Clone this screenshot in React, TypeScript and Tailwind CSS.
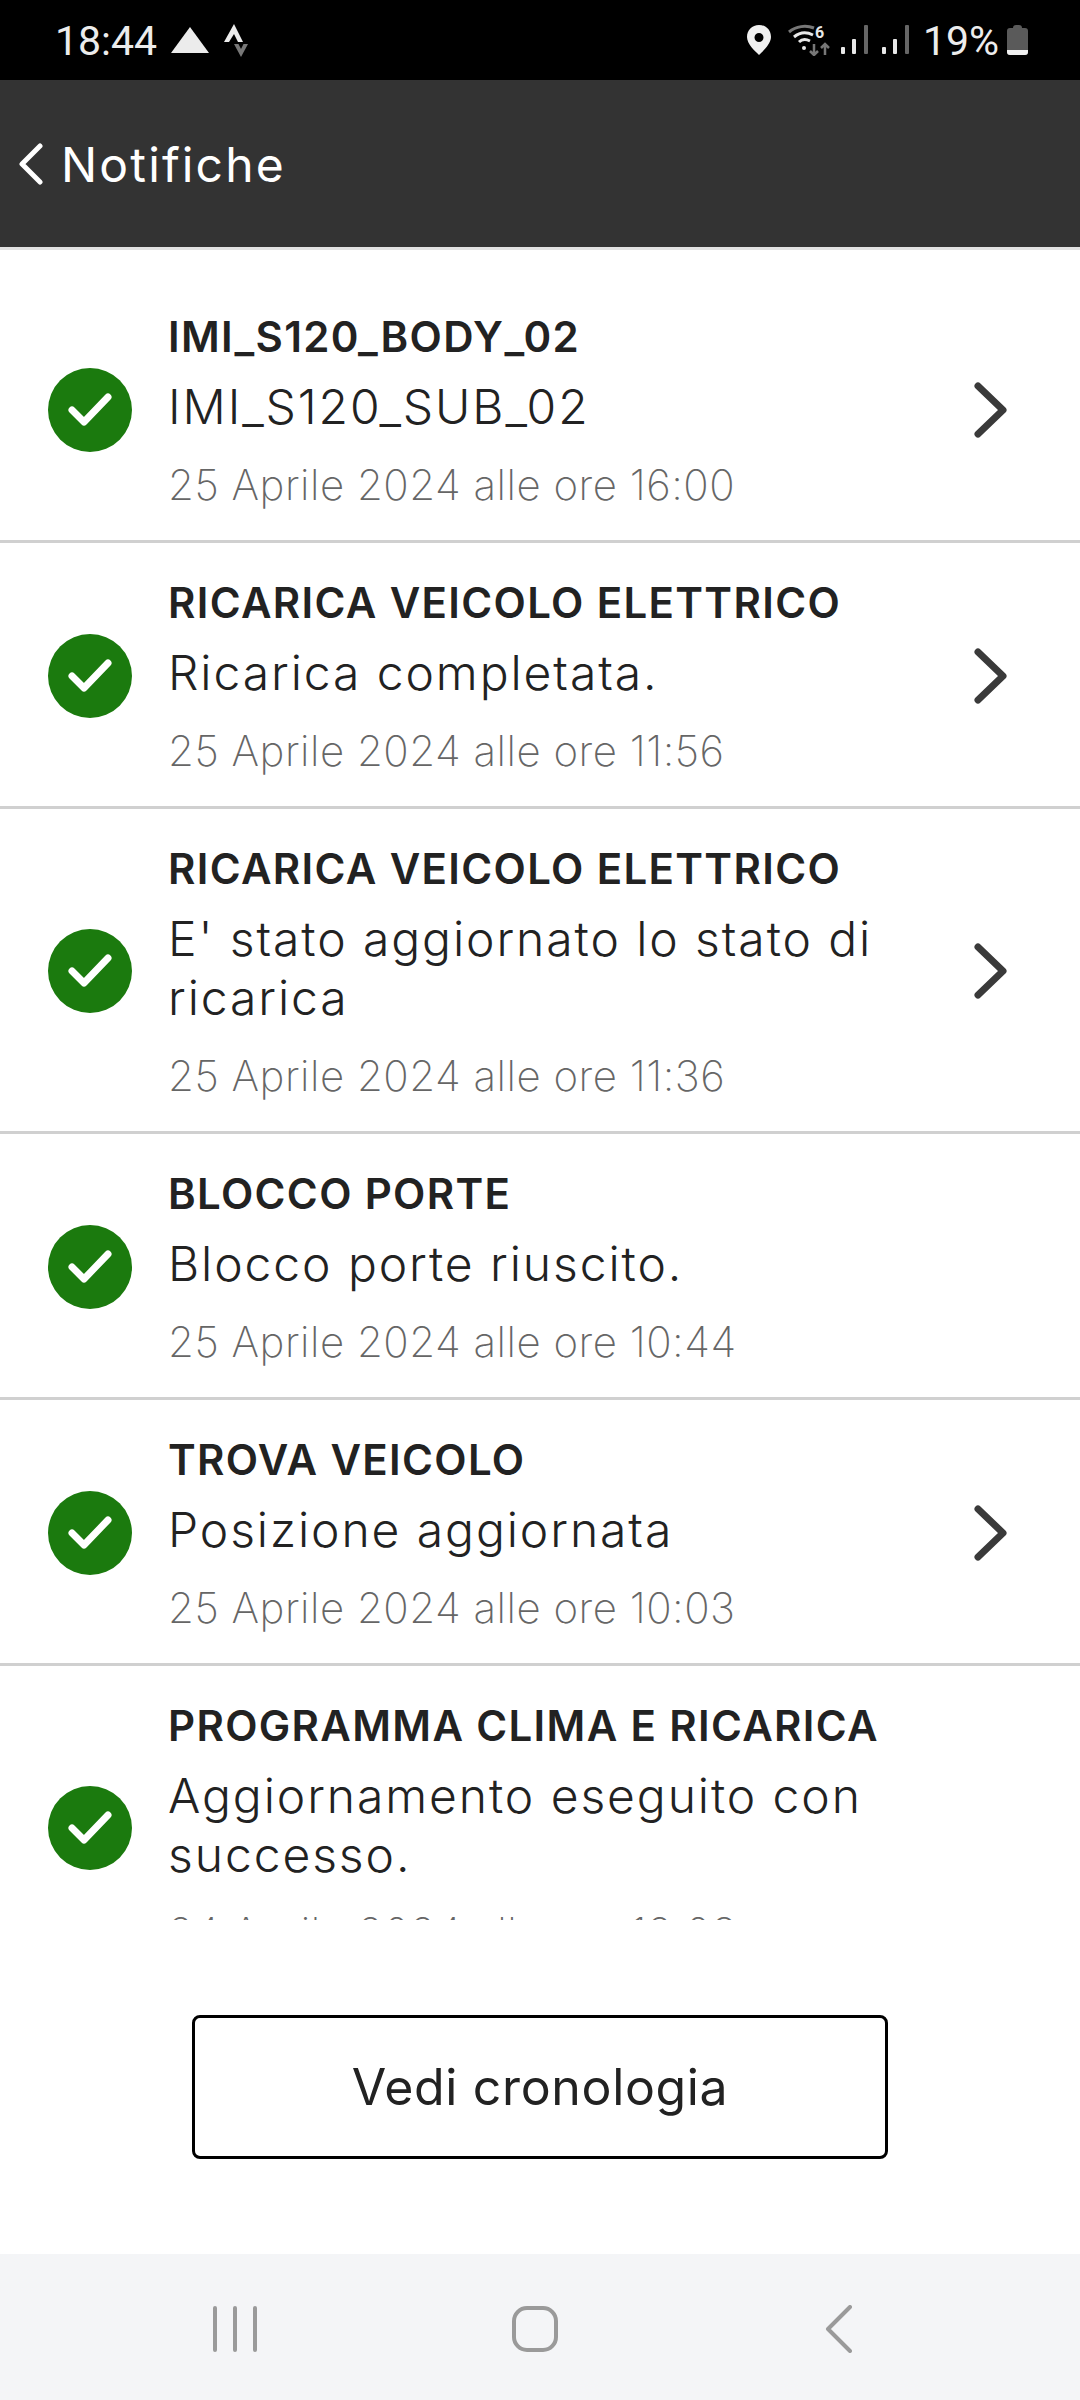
import React from "react";

type Item = {
  title: string;
  body: string;
  date: string;
  arrow: boolean;
};

const items: Item[] = [
  { title: "IMI_S120_BODY_02", body: "IMI_S120_SUB_02", date: "25 Aprile 2024 alle ore 16:00", arrow: true },
  { title: "RICARICA VEICOLO ELETTRICO", body: "Ricarica completata.", date: "25 Aprile 2024 alle ore 11:56", arrow: true },
  { title: "RICARICA VEICOLO ELETTRICO", body: "E' stato aggiornato lo stato di ricarica", date: "25 Aprile 2024 alle ore 11:36", arrow: true },
  { title: "BLOCCO PORTE", body: "Blocco porte riuscito.", date: "25 Aprile 2024 alle ore 10:44", arrow: false },
  { title: "TROVA VEICOLO", body: "Posizione aggiornata", date: "25 Aprile 2024 alle ore 10:03", arrow: true },
  { title: "PROGRAMMA CLIMA E RICARICA", body: "Aggiornamento eseguito con successo.", date: "24 Aprile 2024 alle ore 12:08", arrow: false },
];

const Bars = () => (
  <svg width="29" height="30" viewBox="0 0 29 30">
    <rect x="0" y="22" width="4" height="7" rx="1" fill="#e8e8e8" />
    <rect x="11" y="14" width="4" height="15" rx="1" fill="#e8e8e8" />
    <rect x="23" y="0" width="4" height="29" rx="1" fill="#666" />
  </svg>
);

const StatusBar = () => (
  <div className="h-[80px] bg-black flex items-center pl-[55px] pr-[52px] text-[#ececec] text-[41px] font-['Roboto',sans-serif]">
    <span className="leading-none pt-[2px]">18:44</span>
    <svg className="ml-[13px]" width="40" height="30" viewBox="0 0 40 30">
      <path d="M20 2 L39 28 L1 28 Z" fill="#ececec" />
    </svg>
    <svg className="ml-[13px]" width="26" height="36" viewBox="0 0 26 36">
      <path d="M1 20 L11 2 L20 20 L15 20 L11 12 L6 20 Z" fill="#ececec" />
      <path d="M11 22 L25 22 L18 35 Z" fill="#777" />
      <path d="M15.5 22 L20.5 22 L18 27 Z" fill="#000" />
    </svg>
    <div className="flex-1" />
    <svg width="24" height="30" viewBox="0 0 24 30">
      <path fillRule="evenodd" d="M12 0 C5 0 0 5 0 12 C0 19 8 26 12 30 C16 26 24 19 24 12 C24 5 19 0 12 0 Z M12 8 A4.500 4.500 0 1 1 12 17 A4.500 4.500 0 1 1 12 8 Z" fill="#f0f0f0" />
    </svg>
    <svg className="ml-[17px]" width="44" height="32" viewBox="0 0 44 32" fill="none">
      <path d="M1 8 C8 2 18 1 26 4" stroke="#777" strokeWidth="3" />
      <path d="M6 13 C12 8 19 8 25 11" stroke="#e8e8e8" strokeWidth="3" />
      <path d="M11 18 C14 15 18 15 22 17" stroke="#e8e8e8" strokeWidth="3" />
      <circle cx="16" cy="24" r="2" fill="#e8e8e8" />
      <path d="M26 20 V31 M22 27 L26 31 L30 27" stroke="#777" strokeWidth="2.500" />
      <path d="M37 31 V20 M33 24 L37 20 L41 24" stroke="#777" strokeWidth="2.500" />
      <text x="27" y="14" fontSize="16" fontWeight="700" fill="#e8e8e8" fontFamily="Roboto, sans-serif">6</text>
    </svg>
    <div className="ml-[9px]"><Bars /></div>
    <div className="ml-[12px]"><Bars /></div>
    <span className="ml-[12px] leading-none pt-[2px]">19%</span>
    <div className="ml-[8px] relative w-[21px] h-[30px] flex flex-col">
      <div className="mx-auto w-[9px] h-[3px] bg-[#5a5a5a] rounded-t-sm" />
      <div className="flex-1 rounded-[3px] bg-[#5a5a5a] flex flex-col justify-end overflow-hidden">
        <div className="h-[5px] bg-[#f0f0f0]" />
      </div>
    </div>
  </div>
);

const Row = ({ item }: { item: Item }) => (
  <div className="border-b-[3px] border-[#d0d0d0] flex items-center pl-[48px] pr-[72px] pt-[36px] pb-[31px] last:border-b-0">
    <div className="w-[84px] h-[84px] mb-[3px] rounded-full bg-[#1b7a0e] flex items-center justify-center shrink-0">
      <svg width="46" height="38" viewBox="0 0 46 38" fill="none">
        <path d="M5 19 L17 31 L41 6" stroke="#fff" strokeWidth="7" strokeLinecap="round" strokeLinejoin="round" />
      </svg>
    </div>
    <div className="ml-[36px] flex-1 min-w-0">
      <div className="text-[42px] leading-[48px] font-semibold text-[#222] tracking-[0.032em] whitespace-nowrap">{item.title}</div>
      <div className="mt-[16px] text-[48px] leading-[59px] font-light text-[#222] tracking-[0.04em] w-[760px]">{item.body}</div>
      <div className="mt-[25px] text-[42px] leading-[48px] font-extralight text-[#666] tracking-[0.012em] whitespace-nowrap">{item.date}</div>
    </div>
    {item.arrow && (
      <svg width="34" height="56" viewBox="0 0 34 56" fill="none" className="shrink-0 mb-[3px]">
        <path d="M4 4 L29 28 L4 52" stroke="#3a3a3a" strokeWidth="7" strokeLinecap="round" strokeLinejoin="round" />
      </svg>
    )}
  </div>
);

export default function App() {
  return (
    <div className="w-[1080px] h-[2400px] bg-white flex flex-col overflow-hidden font-['Inter',sans-serif]">
      <StatusBar />
      <div className="h-[170px] shrink-0 bg-[#333333] border-b-[3px] border-[#e2e2e2] flex items-center pl-[18px]">
        <svg width="26" height="42" viewBox="0 0 26 42" fill="none">
          <path d="M22 3 L4 21 L22 39" stroke="#fff" strokeWidth="5" strokeLinecap="round" strokeLinejoin="round" />
        </svg>
        <span className="ml-[17px] pt-[2px] text-[48px] font-normal text-white tracking-[0.045em]">Notifiche</span>
      </div>

      <div className="h-[1670px] shrink-0 overflow-hidden pt-[27px]">
        {items.map((item, i) => (
          <Row key={i} item={item} />
        ))}
      </div>

      <div className="flex-1 flex items-center justify-center">
        <div className="w-[696px] h-[144px] border-[3px] border-black rounded-[8px] flex items-center justify-center text-[50px] tracking-[0.013em] text-[#222]">
          Vedi cronologia
        </div>
      </div>

      <div className="h-[146px] shrink-0 bg-[#f4f5f7] flex items-center pl-[212px] pt-[4px]">
        <svg width="46" height="46" viewBox="0 0 46 46" fill="none">
          <path d="M3 2 V44 M23 2 V44 M43 2 V44" stroke="#9a9a9a" strokeWidth="4" strokeLinecap="round" />
        </svg>
        <svg className="ml-[254px]" width="46" height="46" viewBox="0 0 46 46" fill="none">
          <rect x="2" y="2" width="42" height="42" rx="13" stroke="#9a9a9a" strokeWidth="4" />
        </svg>
        <svg className="ml-[267px]" width="28" height="48" viewBox="0 0 28 48" fill="none">
          <path d="M25 2 L3 24 L25 46" stroke="#9a9a9a" strokeWidth="4" strokeLinecap="round" strokeLinejoin="round" />
        </svg>
      </div>
    </div>
  );
}
